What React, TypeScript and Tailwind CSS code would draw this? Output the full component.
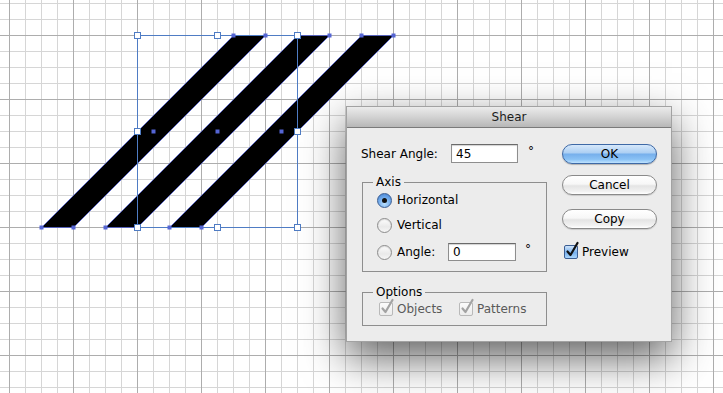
import React from "react";

const blue = "#5565d4";
const selBlue = "#4f7cc4";
const offsets = [0, 64, 128];

function Canvas() {
  const anchors: [number, number][] = [];
  offsets.forEach((o) => {
    anchors.push([41 + o, 227], [73 + o, 227], [233 + o, 35], [265 + o, 35]);
  });
  const handles: [number, number][] = [
    [137, 35], [217, 35], [297, 35],
    [137, 131], [297, 131],
    [137, 227], [217, 227], [297, 227],
  ];
  const centers = [153, 217, 281];

  return (
    <svg width={723} height={393} className="block">
      <defs>
        <pattern id="minor" x={9} y={3} width={16} height={16} patternUnits="userSpaceOnUse">
          <rect width={1} height={16} fill="#d6d6d6" />
          <rect width={16} height={1} fill="#d6d6d6" />
        </pattern>
        <pattern id="major" x={9} y={35} width={64} height={64} patternUnits="userSpaceOnUse">
          <rect width={1} height={64} fill="#adadad" />
          <rect width={64} height={1} fill="#adadad" />
        </pattern>
      </defs>
      <rect width="100%" height="100%" fill="#ffffff" />
      <rect width="100%" height="100%" fill="url(#minor)" />
      <rect width="100%" height="100%" fill="url(#major)" />

      {/* sheared stripes */}
      {offsets.map((o) => (
        <polygon
          key={o}
          points={`${41.5 + o},227.5 ${73.5 + o},227.5 ${265.5 + o},35.5 ${233.5 + o},35.5`}
          fill="#000"
          stroke={blue}
          strokeWidth={0.8}
        />
      ))}

      {/* bounding box */}
      <rect x={137.5} y={35.5} width={160} height={192} fill="none" stroke={selBlue} strokeWidth={1} />

      {anchors.map(([x, y], i) => (
        <rect key={i} x={x - 1.5} y={y - 1.5} width={4} height={4} fill={blue} />
      ))}
      {centers.map((x) => (
        <rect key={x} x={x - 1.5} y={129.5} width={4} height={4} fill={blue} />
      ))}
      {handles.map(([x, y], i) => (
        <rect key={i} x={x - 2.5} y={y - 2.5} width={6} height={6} fill="#fff" stroke={selBlue} strokeWidth={1} />
      ))}
    </svg>
  );
}

function AquaButton({ label, primary }: { label: string; primary?: boolean }) {
  return (
    <div
      className={
        primary
          ? "h-[20px] w-[95px] rounded-full border border-[#3e69a6] bg-[linear-gradient(to_bottom,#d6e8fb_0%,#aed0f3_42%,#77b0ec_52%,#8ac2f5_80%,#bfe3ff_100%)] shadow-[0_1px_1px_rgba(0,0,0,0.25)] flex items-center justify-center"
          : "h-[20px] w-[95px] rounded-full border border-[#8a8a8a] bg-[linear-gradient(to_bottom,#ffffff_0%,#f7f7f7_45%,#e4e4e4_55%,#f1f1f1_85%,#ffffff_100%)] shadow-[0_1px_1px_rgba(0,0,0,0.15)] flex items-center justify-center"
      }
    >
      {label}
    </div>
  );
}

function Radio({ checked }: { checked?: boolean }) {
  if (checked) {
    return (
      <div className="w-[15px] h-[15px] rounded-full border border-[#3b5d92] bg-[radial-gradient(circle_at_50%_75%,#b9e0ff_0%,#6ea8ea_55%,#3f7ccc_100%)] flex items-center justify-center shrink-0">
        <div className="w-[5px] h-[5px] rounded-full bg-[#111]" />
      </div>
    );
  }
  return (
    <div className="w-[15px] h-[15px] rounded-full border border-[#8c8c8c] bg-[linear-gradient(to_bottom,#fdfdfd,#e9e9e9_60%,#f6f6f6)] shadow-[inset_0_1px_1px_rgba(0,0,0,0.12)] shrink-0" />
  );
}

function CheckBox({ disabled }: { disabled?: boolean }) {
  return (
    <div
      className={
        disabled
          ? "relative w-[14px] h-[14px] rounded-[2px] border border-[#b9b9b9] bg-[linear-gradient(to_bottom,#fbfbfb,#ececec)] shrink-0"
          : "relative w-[14px] h-[14px] rounded-[2px] border border-[#3b5d92] bg-[linear-gradient(to_bottom,#cfe4fa,#78b0ec_55%,#a9d6fd)] shrink-0"
      }
    >
      <svg width={15} height={17} viewBox="0 0 15 17" className="absolute left-[0px] top-[-5px]">
        <path
          d="M2.5 10.5 L5.5 14 L12.5 2"
          fill="none"
          stroke={disabled ? "#a3a3a3" : "#111"}
          strokeWidth={2.2}
          strokeLinecap="round"
          strokeLinejoin="round"
        />
      </svg>
    </div>
  );
}

function NumberField({ value, width, height }: { value: string; width: string; height: string }) {
  return (
    <input
      readOnly
      value={value}
      className={`${width} ${height} bg-white border border-[#8e8e8e] border-t-[#6a6a6a] shadow-[inset_0_1px_1px_rgba(0,0,0,0.18)] pl-[4px] outline-none text-[12px] text-black`}
    />
  );
}

function ShearDialog() {
  return (
    <div className="absolute left-[346px] top-[106px] w-[326px] h-[236px] flex flex-col bg-[#ececec] border border-[#a2a2a2] shadow-[0_16px_40px_rgba(0,0,0,0.62)] font-['DejaVu_Sans',sans-serif] text-[12px] text-black">
      {/* title bar */}
      <div className="h-[21px] flex items-center justify-center border-b border-[#7a7a7a] bg-[linear-gradient(to_bottom,#ebebeb,#d2d2d2_50%,#b7b7b7)] text-[#1c1c1c]">
        Shear
      </div>

      <div className="flex px-[14px] pt-[16px]">
        {/* left column */}
        <div className="w-[187px] flex flex-col">
          <div className="flex items-center h-[19px]">
            <span className="w-[90px]">Shear Angle:</span>
            <NumberField value="45" width="w-[67px]" height="h-[19px]" />
            <span className="ml-[10px] -mt-[6px]">°</span>
          </div>

          <fieldset className="mt-[12px] ml-[1px] w-[185px] border border-[#8e8e8e] p-0 pb-[8px]">
            <legend className="ml-[10px] px-[3px] leading-[14px]">Axis</legend>
            <div className="px-[14px] flex flex-col">
              <div className="flex items-center h-[22px]">
                <Radio checked />
                <span className="ml-[5px]">Horizontal</span>
              </div>
              <div className="flex items-center h-[22px] mt-[3px]">
                <Radio />
                <span className="ml-[5px]">Vertical</span>
              </div>
              <div className="flex items-center h-[22px] mt-[5px]">
                <Radio />
                <span className="ml-[5px] w-[51px]">Angle:</span>
                <NumberField value="0" width="w-[68px]" height="h-[18px]" />
                <span className="ml-[9px] -mt-[6px]">°</span>
              </div>
            </div>
          </fieldset>

          <fieldset className="mt-[13px] ml-[1px] w-[185px] border border-[#8e8e8e] p-0 pb-[6px]">
            <legend className="ml-[10px] px-[3px] leading-[14px]">Options</legend>
            <div className="px-[16px] flex items-center h-[20px] text-[#5a5a5a]">
              <div className="flex items-center w-[80px]">
                <CheckBox disabled />
                <span className="ml-[4px]">Objects</span>
              </div>
              <div className="flex items-center">
                <CheckBox disabled />
                <span className="ml-[4px]">Patterns</span>
              </div>
            </div>
          </fieldset>
        </div>

        {/* right column */}
        <div className="ml-[14px] w-[95px] flex flex-col">
          <AquaButton label="OK" primary />
          <div className="mt-[11px]">
            <AquaButton label="Cancel" />
          </div>
          <div className="mt-[14px]">
            <AquaButton label="Copy" />
          </div>
          <div className="mt-[14px] h-[18px] flex items-center pl-[2px]">
            <CheckBox />
            <span className="ml-[4px]">Preview</span>
          </div>
        </div>
      </div>
    </div>
  );
}

export default function App() {
  return (
    <div className="relative w-[723px] h-[393px] overflow-hidden bg-white">
      <Canvas />
      <ShearDialog />
    </div>
  );
}
